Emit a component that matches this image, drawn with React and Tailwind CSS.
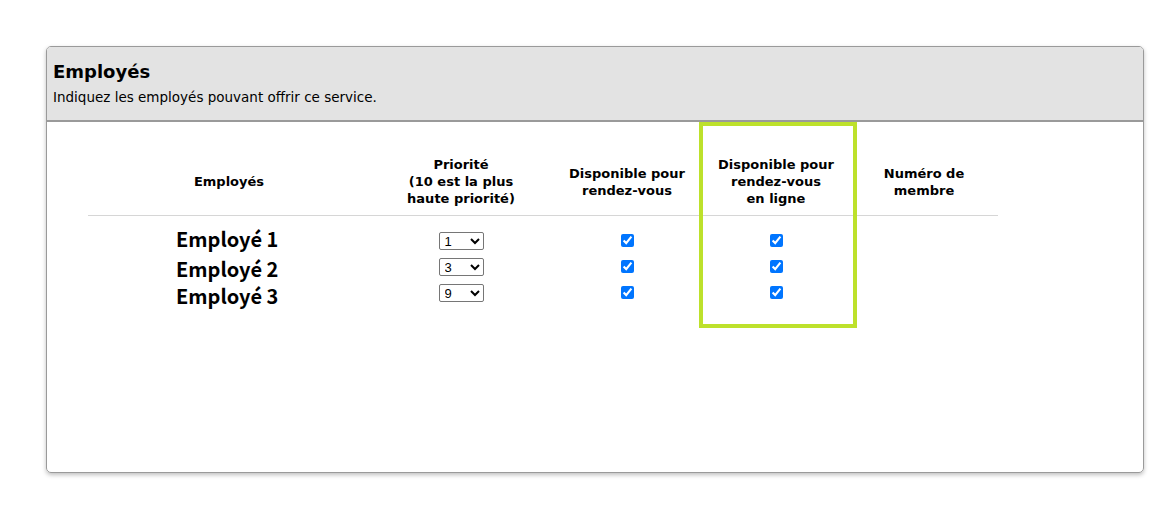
import React from 'react';

const employees = [
  { id: 1, name: 'Employé 1', priority: '1', nudge: '-top-[2px]' },
  { id: 2, name: 'Employé 2', priority: '3', nudge: 'top-[2px]' },
  { id: 3, name: 'Employé 3', priority: '9', nudge: 'top-[3px]' },
];

const App = () => {
  return (
    <div className="min-h-[521px] bg-white pt-[46px] pl-[46px] font-['DejaVu_Sans',Verdana,sans-serif] text-black">
      <div className="relative w-[1098px] h-[427px] border border-[#9a9a9a] rounded-[5px] shadow-[0_2px_4px_rgba(0,0,0,0.25)] overflow-hidden">
        {/* Header */}
        <div className="bg-[#e3e3e3] border-b-2 border-[#9a9a9a] h-[75px] pl-[6px] pt-[14px]">
          <h2 className="text-[18px] font-bold leading-[22px]">Employés</h2>
          <p className="text-[13.5px] leading-[16px] mt-[6px]">Indiquez les employés pouvant offrir ce service.</p>
        </div>

        {/* Table */}
        <div className="pl-[41px] pt-[34px]">
          <table className="w-[910px] border-collapse text-[13px]">
            <thead>
              <tr className="border-b border-[#d6d6d6]">
                <th className="w-[282px] h-[59px] pb-[8px] font-bold leading-[17px] align-middle">Employés</th>
                <th className="w-[182px] pb-[8px] font-bold leading-[17px]">
                  Priorité<br />(10 est la plus<br />haute priorité)
                </th>
                <th className="w-[150px] pb-[8px] font-bold leading-[17px]">
                  Disponible pour<br />rendez-vous
                </th>
                <th className="w-[148px] pb-[8px] font-bold leading-[17px]">
                  Disponible pour<br />rendez-vous<br />en ligne
                </th>
                <th className="pb-[8px] font-bold leading-[17px]">
                  Numéro de<br />membre
                </th>
              </tr>
            </thead>
            <tbody>
              {employees.map((emp, i) => (
                <tr key={emp.id} className={i === 0 ? 'h-[39px] align-bottom' : 'h-[26px] align-bottom'}>
                  <td className="pl-[88px]">
                    <span className={`relative ${emp.nudge} font-['Noto_Sans_CJK_JP',sans-serif] font-bold text-[20px] leading-[24px] whitespace-nowrap`}>
                      {emp.name}
                    </span>
                  </td>
                  <td className="text-center pb-[3px]">
                    <select
                      defaultValue={emp.priority}
                      className="w-[45px] h-[18px] border border-[#767676] rounded-[2px] text-[13px] font-['Liberation_Sans',Arial,sans-serif] bg-white pl-[1px]"
                    >
                      {['1', '2', '3', '4', '5', '6', '7', '8', '9', '10'].map((v) => (
                        <option key={v} value={v}>{v}</option>
                      ))}
                    </select>
                  </td>
                  <td className="text-center pb-[5px]">
                    <input type="checkbox" defaultChecked className="w-[13px] h-[13px] align-middle accent-[#0075ff]" />
                  </td>
                  <td className="text-center pb-[5px]">
                    <input type="checkbox" defaultChecked className="w-[13px] h-[13px] align-middle accent-[#0075ff]" />
                  </td>
                  <td></td>
                </tr>
              ))}
            </tbody>
          </table>
        </div>

        {/* Highlight around online column */}
        <div className="absolute left-[652px] top-[75px] w-[158px] h-[206px] border-4 border-[#bde12b] pointer-events-none"></div>
      </div>
    </div>
  );
};

export default App;
